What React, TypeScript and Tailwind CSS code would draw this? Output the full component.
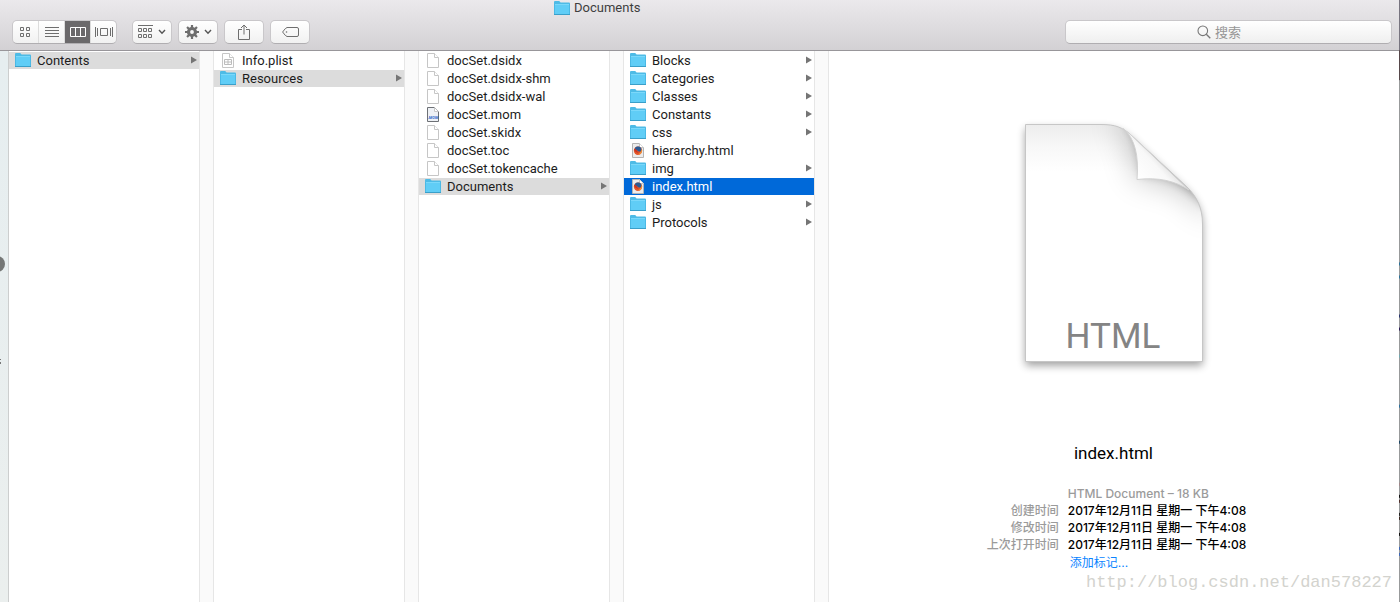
import { useState, type ReactNode } from "react";

type Kind = "folder" | "file" | "plist" | "mom" | "html";
type Entry = { name: string; kind: Kind };

const columns: { label: string; open: string; entries: Entry[] }[] = [
  { label: "docset", open: "Contents", entries: [{ name: "Contents", kind: "folder" }] },
  {
    label: "Contents",
    open: "Resources",
    entries: [
      { name: "Info.plist", kind: "plist" },
      { name: "Resources", kind: "folder" },
    ],
  },
  {
    label: "Resources",
    open: "Documents",
    entries: [
      { name: "docSet.dsidx", kind: "file" },
      { name: "docSet.dsidx-shm", kind: "file" },
      { name: "docSet.dsidx-wal", kind: "file" },
      { name: "docSet.mom", kind: "mom" },
      { name: "docSet.skidx", kind: "file" },
      { name: "docSet.toc", kind: "file" },
      { name: "docSet.tokencache", kind: "file" },
      { name: "Documents", kind: "folder" },
    ],
  },
  {
    label: "Documents",
    open: "index.html",
    entries: [
      { name: "Blocks", kind: "folder" },
      { name: "Categories", kind: "folder" },
      { name: "Classes", kind: "folder" },
      { name: "Constants", kind: "folder" },
      { name: "css", kind: "folder" },
      { name: "hierarchy.html", kind: "html" },
      { name: "img", kind: "folder" },
      { name: "index.html", kind: "html" },
      { name: "js", kind: "folder" },
      { name: "Protocols", kind: "folder" },
    ],
  },
];

const details = [
  { label: "创建时间", value: "2017年12月11日 星期一 下午4:08" },
  { label: "修改时间", value: "2017年12月11日 星期一 下午4:08" },
  { label: "上次打开时间", value: "2017年12月11日 星期一 下午4:08" },
];

export default function App() {
  return (
    <div className="relative flex min-h-screen flex-col overflow-hidden bg-white font-['Roboto','Noto_Sans_CJK_SC',sans-serif] text-[13px] text-[#1c1c1c]">
      <Toolbar />
      <main className="flex flex-1">
        <SidebarEdge />
        {columns.map((column, i) => (
          <FileColumn key={column.label} {...column} active={i === columns.length - 1} />
        ))}
        <Preview />
      </main>
      <WindowEdge />
      <span className="absolute right-2 bottom-2 font-['Liberation_Mono',monospace] text-[17px] leading-6 text-[#d3d3ce]">
        http://blog.csdn.net/dan578227
      </span>
    </div>
  );
}

function Toolbar() {
  const [view, setView] = useState("columns");
  const views = [
    { id: "icons", icon: <GridIcon /> },
    { id: "list", icon: <ListIcon /> },
    { id: "columns", icon: <ColumnsIcon /> },
    { id: "coverflow", icon: <CoverFlowIcon /> },
  ];

  return (
    <header className="border-b border-[#98969a] bg-linear-to-b from-[#ebe9ec] to-[#d3d1d4]">
      <h1 className="ml-[554px] flex h-5 items-start gap-1 leading-4 text-[#3e3e3e]">
        <FolderIcon />
        Documents
      </h1>
      <div className="flex items-center pr-2 pb-1.5 pl-3">
        <div
          role="group"
          aria-label="View"
          className="flex h-6 overflow-hidden rounded-[5px] border border-[#c9c7ca] border-b-[#b0aeb1] bg-linear-to-b from-white to-[#f1f1f1]"
        >
          {views.map(({ id, icon }) => (
            <button
              key={id}
              type="button"
              aria-label={id}
              aria-pressed={view === id}
              onClick={() => setView(id)}
              className={`flex w-[26px] items-center justify-center border-r border-[#dcdcdc] first:pr-0.5 last:w-[25px] last:border-r-0 ${
                view === id ? "bg-[#6b696b] text-white" : "text-[#6e6e6e]"
              }`}
            >
              {icon}
            </button>
          ))}
        </div>
        <div className="ml-[15px] flex gap-1.5">
          <ToolButton label="Arrange">
            <ArrangeIcon />
            <Chevron />
          </ToolButton>
          <ToolButton label="Action">
            <GearIcon />
            <Chevron />
          </ToolButton>
          <ToolButton label="Share">
            <ShareIcon />
          </ToolButton>
          <ToolButton label="Edit tags">
            <TagIcon />
          </ToolButton>
        </div>
        <div className="relative ml-auto w-[327px]">
          <svg viewBox="0 0 14 14" className="absolute top-[5px] left-1/2 -ml-8 h-3.5 w-3.5" aria-hidden="true">
            <circle cx="5.8" cy="5.8" r="4.8" fill="none" stroke="#777" strokeWidth="1.1" />
            <path d="M9.3 9.3l4 4" stroke="#777" strokeWidth="1.3" />
          </svg>
          <input
            type="search"
            aria-label="搜索"
            placeholder="搜索"
            className="block h-6 w-full rounded-[5px] border border-[#c9c7ca] border-b-[#b0aeb1] bg-linear-to-b from-white to-[#efefef] pr-2 pl-5 text-center outline-none placeholder:text-[#969696]"
          />
        </div>
      </div>
    </header>
  );
}

function ToolButton({ label, children }: { label: string; children: ReactNode }) {
  return (
    <button
      type="button"
      aria-label={label}
      className="flex h-6 w-10 items-center justify-center gap-[5px] rounded-[5px] border border-[#c9c7ca] border-b-[#b0aeb1] bg-linear-to-b from-white to-[#f1f1f1] text-[#6e6e6e]"
    >
      {children}
    </button>
  );
}

function FileColumn({
  label,
  open,
  entries,
  active,
}: {
  label: string;
  open: string;
  entries: Entry[];
  active: boolean;
}) {
  const [selected, setSelected] = useState(open);

  return (
    <section aria-label={label} className="flex w-[205px] shrink-0">
      <ul className="flex-1 space-y-px pt-px">
        {entries.map(({ name, kind }) => {
          const current = name === selected;
          const tone = active ? "bg-[#0069d9] text-white" : "bg-[#dcdcdc]";
          return (
            <li key={name}>
              <button
                type="button"
                aria-current={current}
                onClick={() => setSelected(name)}
                className={`flex h-[17px] w-full items-start gap-1.5 pr-0.5 pl-1.5 text-left leading-[17px] ${current ? tone : ""}`}
              >
                <EntryIcon kind={kind} />
                <span className="flex-1">{name}</span>
                {kind === "folder" ? (
                  <svg viewBox="0 0 6 8" className="mt-1 h-2 w-1.5" aria-hidden="true">
                    <path d="M0 0.5L6 4L0 7.5Z" fill="#757575" />
                  </svg>
                ) : null}
              </button>
            </li>
          );
        })}
      </ul>
      <div className="w-[15px] border-x border-[#e6e6e6] bg-[#fafafa]" />
    </section>
  );
}

function Preview() {
  return (
    <section
      aria-label="Preview"
      className="flex min-w-0 flex-1 flex-col items-center pt-[73px] pr-0.5 pb-8 text-black"
    >
      <DocumentArt />
      <h2 className="mt-[79px] text-[17px] leading-6">index.html</h2>
      <dl className="mt-5 ml-1.5 grid grid-cols-[auto_auto] gap-x-[9px] font-['Inter','Noto_Sans_CJK_SC',sans-serif] text-xs leading-[17px]">
        <dd className="col-start-2 font-medium text-[#9b9b9b]">HTML Document – 18 KB</dd>
        {details.map(({ label, value }) => (
          <div key={label} className="contents">
            <dt className="text-right font-medium text-[#9b9b9b]">{label}</dt>
            <dd className="font-medium">{value}</dd>
          </div>
        ))}
        <dd className="col-start-2 pt-px pl-0.5">
          <a href="#tags" className="text-[#0a84ff]">
            添加标记...
          </a>
        </dd>
      </dl>
    </section>
  );
}

function SidebarEdge() {
  return (
    <aside className="w-[9px] shrink-0 border-r border-[#cccece] bg-linear-to-b from-[#e6eef0] to-[#ebefee]">
      <svg viewBox="0 0 8 320" className="block h-80 w-2" aria-hidden="true">
        <circle cx="-3" cy="213" r="8" fill="#757776" />
        <path d="M0 308h1v1h-1zM0 311h1v2h-1z" fill="#777" />
      </svg>
    </aside>
  );
}

/* Sliver of the desktop showing past the right side of the window. */
function WindowEdge() {
  const marks = [
    [262, "#2c7197"],
    [275, "#2c7197"],
    [314, "#27336b"],
    [327, "#2b1b55"],
    [354, "#70a8b0"],
    [404, "#2b6f9b"],
    [440, "#1e4663"],
    [482, "#a18588"],
    [494, "#111"],
    [499, "#51302b"],
    [512, "#222"],
    [516, "#3b2820"],
    [532, "#111"],
    [546, "#3d67b5"],
    [552, "#3d67b5"],
  ] as const;
  return (
    <svg viewBox="0 0 1 602" preserveAspectRatio="none" className="absolute top-0 right-0 h-full w-px" aria-hidden="true">
      <rect width="1" height="602" fill="#989a9b" />
      <rect width="1" height="50" fill="#77747f" />
      <rect y="50" width="1" height="30" fill="#56474a" />
      {marks.map(([y, fill]) => (
        <rect key={y} y={y} width="1" height="3" fill={fill} />
      ))}
    </svg>
  );
}

function DocumentArt() {
  const sheet = "M0.5 0.5H76C90 0.5 97 3 106 11L162 63C172 73 177.5 84 177.5 100V237.5H0.5Z";
  const flap = "M98 4.5C110 14 114 32 112 55.5C134 53 150 57 164 66L106 11Z";
  return (
    <svg viewBox="0 0 178 238" className="h-[238px] w-[178px] overflow-visible" role="img" aria-label="HTML document">
      <defs>
        <clipPath id="sheet">
          <path d={sheet} />
        </clipPath>
        <linearGradient id="top" x1="0" y1="0" x2="0" y2="1">
          <stop offset="0" stopColor="#ececec" />
          <stop offset="0.5" stopColor="#f8f8f8" />
          <stop offset="1" stopColor="#fff" />
        </linearGradient>
        <linearGradient id="flap" gradientUnits="userSpaceOnUse" x1="114" y1="54" x2="136" y2="34">
          <stop offset="0" stopColor="#fff" />
          <stop offset="0.7" stopColor="#f8f8f8" />
          <stop offset="1" stopColor="#e2e2e2" />
        </linearGradient>
        <filter id="drop" x="-20%" y="-20%" width="140%" height="140%">
          <feGaussianBlur stdDeviation="4" />
        </filter>
        <filter id="wide" x="-50%" y="-50%" width="200%" height="200%">
          <feGaussianBlur stdDeviation="16" />
        </filter>
        <filter id="tight" x="-50%" y="-50%" width="200%" height="200%">
          <feGaussianBlur stdDeviation="5" />
        </filter>
      </defs>
      <path d={sheet} transform="translate(0 4)" fill="#000" opacity="0.38" filter="url(#drop)" />
      <path d={sheet} fill="#fff" />
      <g clipPath="url(#sheet)">
        <rect width="178" height="48" fill="url(#top)" />
        <path d="M84 -8C112 8 110 30 112 55C140 52 168 62 186 96L200 0Z" fill="#000" opacity="0.26" filter="url(#wide)" />
        <path d="M98 -4C114 14 116 32 116 51C138 49 158 56 182 84L200 0Z" fill="#000" opacity="0.3" filter="url(#tight)" />
      </g>
      <path d={sheet} fill="none" stroke="#c6c6c6" />
      <path d={flap} fill="url(#flap)" stroke="#d2d2d2" />
      <text x="88" y="224" textAnchor="middle" fontSize="35" fill="#848484">
        HTML
      </text>
    </svg>
  );
}

function EntryIcon({ kind }: { kind: Kind }) {
  if (kind === "folder") return <FolderIcon />;
  return (
    <svg viewBox="0 0 16 16" className="h-4 w-4 shrink-0" aria-hidden="true">
      <path
        d="M2.5 1.5H9.5L13.5 5.5V15.5H2.5Z"
        fill={kind === "mom" ? "#eef1f5" : kind === "html" ? "#ececec" : "#fff"}
        stroke={kind === "mom" ? "#6d7075" : kind === "html" ? "#b4b4b4" : "#c6c6c6"}
      />
      <path d="M9.5 1.5V5.5H13.5" fill="#fff" stroke="#c6c6c6" />
      {kind === "plist" ? (
        <path d="M4.5 7.5H11.5V12.5H4.5ZM4.5 10H11.5M8 7.5V12.5" fill="none" stroke="#bcbcbc" />
      ) : null}
      {kind === "mom" ? (
        <text x="8" y="13" textAnchor="middle" fontSize="4" fontWeight="bold" fontStyle="italic" fill="#2563c9">
          .MOM
        </text>
      ) : null}
      {kind === "html" ? (
        <>
          <circle cx="8" cy="8.8" r="4.2" fill="#e4572a" />
          <path d="M5 6C6.4 4 10 4 11.2 6.2C12 7.6 11.4 9.2 10 9.6C7.8 9.6 7.6 7.8 5 7.4Z" fill="#2b5b94" />
          <path d="M4 6.8C4.2 9 6 11 8.6 10.6C7.2 9.6 6.6 8.6 6.4 7.6Z" fill="#c93322" />
          <path d="M11.8 6.8C12.6 9.6 11 12.6 8 12.8C9.8 11.8 11.4 10 11.8 6.8Z" fill="#f6a93b" />
        </>
      ) : null}
    </svg>
  );
}

function FolderIcon() {
  return (
    <svg viewBox="0 0 16 16" className="h-4 w-4 shrink-0" aria-hidden="true">
      <path d="M0 14V2Q0 1 1 1H5.2L6.6 2.5H15Q16 2.5 16 3.5V14Z" fill="#4ebbe6" />
      <path d="M0 4H16V14H0Z" fill="#60cdf6" />
      <path d="M1 4.5H15" stroke="#7bd8fa" />
      <path d="M0.5 4V14M15.5 4V14" stroke="#4bb9e5" />
      <path d="M0 14.5H16" stroke="#3a9fc9" />
    </svg>
  );
}

function Chevron() {
  return (
    <svg viewBox="0 0 8 6" className="h-1.5 w-2" aria-hidden="true">
      <path d="M1 1L4 4.2L7 1" fill="none" stroke="#555" strokeWidth="1.4" />
    </svg>
  );
}

function GridIcon() {
  return (
    <svg viewBox="0 0 10 10" className="h-2.5 w-2.5" aria-hidden="true">
      <path d="M0.5 0.5h3v3h-3zM6.5 0.5h3v3h-3zM0.5 6.5h3v3h-3zM6.5 6.5h3v3h-3z" fill="none" stroke="currentColor" />
    </svg>
  );
}

function ListIcon() {
  return (
    <svg viewBox="0 0 14 10" className="h-2.5 w-3.5" aria-hidden="true">
      <path d="M0 0.5h14M0 3.5h14M0 6.5h14M0 9.5h14" stroke="currentColor" />
    </svg>
  );
}

function ColumnsIcon() {
  return (
    <svg viewBox="0 0 16 10" className="h-2.5 w-4" aria-hidden="true">
      <path d="M0.5 0.5h15v9h-15zM5.5 0.5v9M10.5 0.5v9" fill="none" stroke="currentColor" />
    </svg>
  );
}

function CoverFlowIcon() {
  return (
    <svg viewBox="0 0 18 10" className="h-2.5 w-[18px]" aria-hidden="true">
      <path d="M5.5 1.5h7v7h-7zM0.5 0v10M2.5 1v8M15.5 1v8M17.5 0v10" fill="none" stroke="currentColor" />
    </svg>
  );
}

function ArrangeIcon() {
  return (
    <svg viewBox="0 0 15 14" className="h-3.5 w-[15px]" aria-hidden="true">
      <path
        d="M0 0.5h15M0.5 3.5h3v3h-3zM5.5 3.5h3v3h-3zM10.5 3.5h3v3h-3zM0.5 9.5h3v3h-3zM5.5 9.5h3v3h-3zM10.5 9.5h3v3h-3z"
        fill="none"
        stroke="currentColor"
      />
    </svg>
  );
}

function GearIcon() {
  return (
    <svg viewBox="-7 -7 14 14" className="h-3.5 w-3.5" aria-hidden="true">
      <circle r="3.5" fill="none" stroke="currentColor" strokeWidth="3.2" />
      {[0, 45, 90, 135].map((angle) => (
        <path key={angle} d="M0 -7V-4M0 4V7" stroke="currentColor" strokeWidth="2.2" transform={`rotate(${angle})`} />
      ))}
    </svg>
  );
}

function ShareIcon() {
  return (
    <svg viewBox="0 0 12 16" className="h-4 w-3" aria-hidden="true">
      <path d="M4 5.5H0.5V15.5H11.5V5.5H8M6 1V10.5M3 4L6 1L9 4" fill="none" stroke="currentColor" />
    </svg>
  );
}

function TagIcon() {
  return (
    <svg viewBox="0 0 17 10" className="h-2.5 w-[17px]" aria-hidden="true">
      <path d="M5 0.5H15Q16.5 0.5 16.5 2V8Q16.5 9.5 15 9.5H5Q3.8 9.5 0.6 5Q3.8 0.5 5 0.5Z" fill="none" stroke="currentColor" />
      <circle cx="4.5" cy="5" r="0.8" fill="currentColor" />
    </svg>
  );
}
